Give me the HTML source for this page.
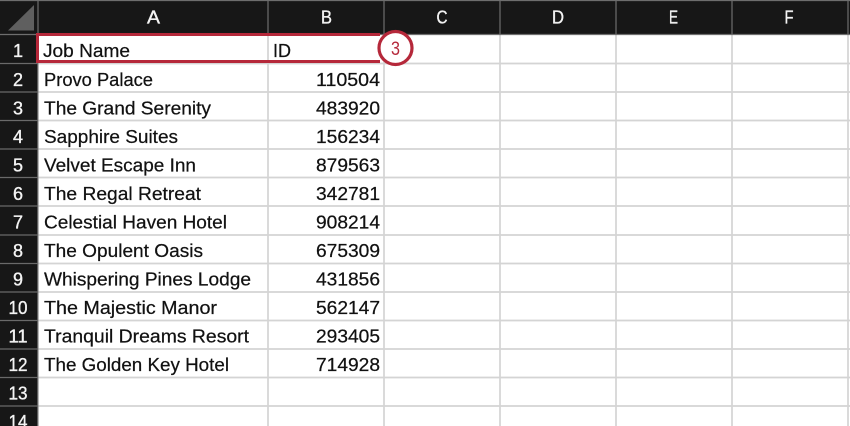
<!DOCTYPE html>
<html>
<head>
<meta charset="utf-8">
<style>
html,body{margin:0;padding:0;width:850px;height:426px;overflow:hidden;background:#fff}
svg{display:block;filter:blur(.35px)}
text{font-family:"Liberation Sans",sans-serif}
.c{font-size:18px;fill:#111;stroke:#111;stroke-width:.22px}
.h{font-size:18px;fill:#f4f4f4;stroke:#f4f4f4;stroke-width:.35px;text-anchor:middle}
</style>
</head>
<body>
<svg width="850" height="426" viewBox="0 0 850 426" xmlns="http://www.w3.org/2000/svg">
<rect width="850" height="426" fill="#fff"/>
<!-- grid -->
<g stroke="#d4d4d4" stroke-width="1.7" fill="none">
<path d="M268 34V426M384 34V426M500 34V426M616 34V426M732 34V426M848 34V426"/>
<path d="M38 63.500H850M38 92H850M38 120.500H850M38 149H850M38 177.500H850M38 206H850M38 235H850M38 263.500H850M38 292H850M38 320.500H850M38 349H850M38 377.500H850M38 406H850"/>
</g>
<!-- headers -->
<rect x="0" y="0" width="850" height="34" fill="#171717"/>
<rect x="0" y="0" width="38" height="426" fill="#171717"/>
<g stroke="#6e6e6e" stroke-width="1.2" fill="none">
<path d="M0 .5H850"/>
<path d="M38 0V34M268 0V34M384 0V34M500 0V34M616 0V34M732 0V34M848 0V34"/>
<path d="M0 34.500H850"/>
</g>
<path d="M38 34V426" stroke="#8a8a8a" stroke-width="1.2"/>
<g stroke="#6a6a6a" stroke-width="1.3">
<path d="M0 63.500H38M0 92H38M0 120.500H38M0 149H38M0 177.500H38M0 206H38M0 235H38M0 263.500H38M0 292H38M0 320.500H38M0 349H38M0 377.500H38M0 406H38"/>
</g>
<polygon points="8,30.500 34,30.500 34,5" fill="#5f5f5f"/>
<g>
<text class="h" x="153.500" y="23.500" textLength="13" lengthAdjust="spacingAndGlyphs">A</text>
<text class="h" x="326.500" y="23.500" textLength="11" lengthAdjust="spacingAndGlyphs">B</text>
<text class="h" x="442" y="23.500" textLength="11" lengthAdjust="spacingAndGlyphs">C</text>
<text class="h" x="558" y="23.500" textLength="12" lengthAdjust="spacingAndGlyphs">D</text>
<text class="h" x="673.500" y="23.500" textLength="9" lengthAdjust="spacingAndGlyphs">E</text>
<text class="h" x="789" y="23.500" textLength="9" lengthAdjust="spacingAndGlyphs">F</text>
<text class="h" x="18" y="57">1</text>
<text class="h" x="18" y="86">2</text>
<text class="h" x="18" y="114.500">3</text>
<text class="h" x="18" y="143">4</text>
<text class="h" x="18" y="171.500">5</text>
<text class="h" x="18" y="200">6</text>
<text class="h" x="18" y="228.500">7</text>
<text class="h" x="18" y="257">8</text>
<text class="h" x="18" y="285.500">9</text>
<text class="h" x="18" y="314" textLength="19" lengthAdjust="spacingAndGlyphs">10</text>
<text class="h" x="18" y="342.500" textLength="19" lengthAdjust="spacingAndGlyphs">11</text>
<text class="h" x="18" y="371" textLength="19" lengthAdjust="spacingAndGlyphs">12</text>
<text class="h" x="18" y="399.500" textLength="19" lengthAdjust="spacingAndGlyphs">13</text>
<text class="h" x="18" y="428" textLength="19" lengthAdjust="spacingAndGlyphs">14</text>
</g>
<!-- cells -->
<g>
<text class="c" x="43" y="57" textLength="87" lengthAdjust="spacingAndGlyphs">Job Name</text>
<text class="c" x="273" y="57" textLength="18" lengthAdjust="spacingAndGlyphs">ID</text>
<text class="c" x="44" y="86" textLength="109" lengthAdjust="spacingAndGlyphs">Provo Palace</text>
<text class="c" x="44" y="114.500" textLength="167" lengthAdjust="spacingAndGlyphs">The Grand Serenity</text>
<text class="c" x="44" y="143" textLength="134" lengthAdjust="spacingAndGlyphs">Sapphire Suites</text>
<text class="c" x="44" y="171.500" textLength="152" lengthAdjust="spacingAndGlyphs">Velvet Escape Inn</text>
<text class="c" x="44" y="200" textLength="157" lengthAdjust="spacingAndGlyphs">The Regal Retreat</text>
<text class="c" x="44" y="228.500" textLength="183" lengthAdjust="spacingAndGlyphs">Celestial Haven Hotel</text>
<text class="c" x="44" y="257" textLength="159" lengthAdjust="spacingAndGlyphs">The Opulent Oasis</text>
<text class="c" x="44" y="285.500" textLength="207" lengthAdjust="spacingAndGlyphs">Whispering Pines Lodge</text>
<text class="c" x="44" y="314" textLength="173" lengthAdjust="spacingAndGlyphs">The Majestic Manor</text>
<text class="c" x="44" y="342.500" textLength="205" lengthAdjust="spacingAndGlyphs">Tranquil Dreams Resort</text>
<text class="c" x="44" y="371" textLength="185" lengthAdjust="spacingAndGlyphs">The Golden Key Hotel</text>
<text class="c" x="316" y="86" textLength="64" lengthAdjust="spacingAndGlyphs">110504</text>
<text class="c" x="316" y="114.500" textLength="64" lengthAdjust="spacingAndGlyphs">483920</text>
<text class="c" x="316" y="143" textLength="64" lengthAdjust="spacingAndGlyphs">156234</text>
<text class="c" x="316" y="171.500" textLength="64" lengthAdjust="spacingAndGlyphs">879563</text>
<text class="c" x="316" y="200" textLength="64" lengthAdjust="spacingAndGlyphs">342781</text>
<text class="c" x="316" y="228.500" textLength="64" lengthAdjust="spacingAndGlyphs">908214</text>
<text class="c" x="316" y="257" textLength="64" lengthAdjust="spacingAndGlyphs">675309</text>
<text class="c" x="316" y="285.500" textLength="64" lengthAdjust="spacingAndGlyphs">431856</text>
<text class="c" x="316" y="314" textLength="64" lengthAdjust="spacingAndGlyphs">562147</text>
<text class="c" x="316" y="342.500" textLength="64" lengthAdjust="spacingAndGlyphs">293405</text>
<text class="c" x="316" y="371" textLength="64" lengthAdjust="spacingAndGlyphs">714928</text>
</g>
<!-- highlight -->
<path d="M380 34.500H37.500V61.500H380" fill="none" stroke="#b5283a" stroke-width="3"/>
<circle cx="395.500" cy="48" r="16.500" fill="#fff" stroke="#b5283a" stroke-width="3.200"/>
<text x="395.500" y="55" text-anchor="middle" style="font-size:19px;fill:#b5283a" textLength="9" lengthAdjust="spacingAndGlyphs">3</text>
</svg>
</body>
</html>
